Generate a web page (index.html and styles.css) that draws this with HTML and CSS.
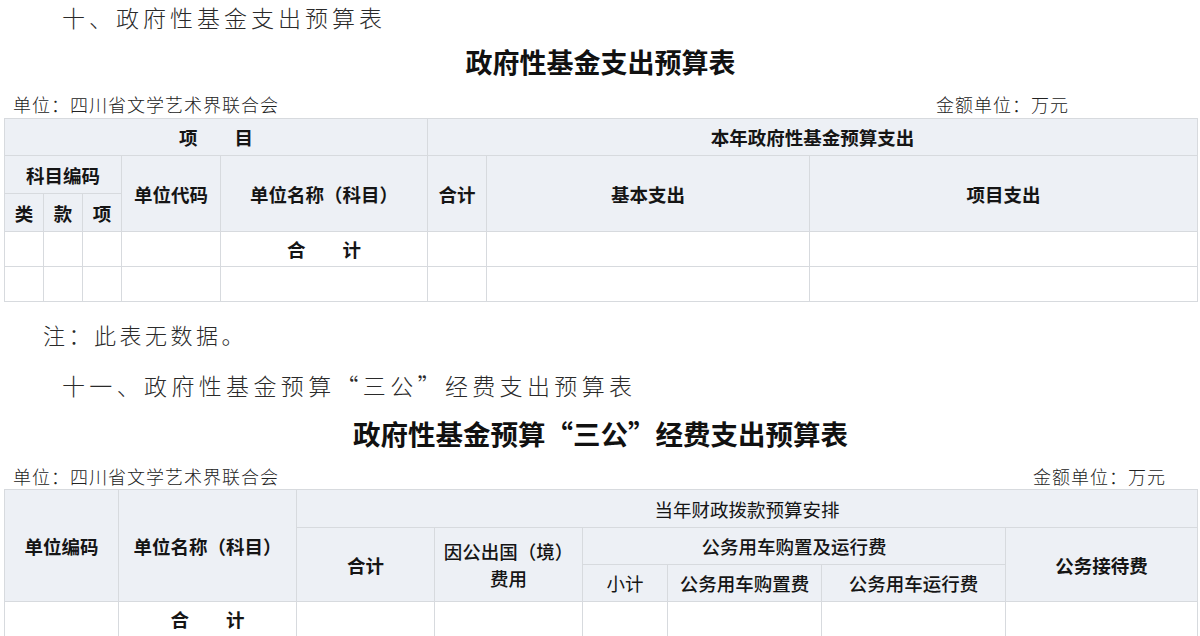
FILE: index.html
```html
<!DOCTYPE html>
<html lang="zh-CN">
<head>
<meta charset="utf-8">
<title>政府性基金支出预算表</title>
<link rel="stylesheet" href="styles.css">
</head>
<body>
<div class="page">
  <h2 class="sec-heading">十、政府性基金支出预算表</h2>
  <h1 class="table-title title-one">政府性基金支出预算表</h1>
  <div class="unit-row unit-one">
    <span>单位：四川省文学艺术界联合会</span>
    <span>金额单位：万元</span>
  </div>
  <table class="budget budget-one">
    <colgroup>
      <col class="c39"><col class="c39"><col class="c39"><col class="c99"><col class="c207"><col class="c59"><col class="c323"><col class="c388">
    </colgroup>
    <thead>
      <tr class="r37">
        <th colspan="5">项　　目</th>
        <th colspan="3">本年政府性基金预算支出</th>
      </tr>
      <tr class="r38">
        <th colspan="3">科目编码</th>
        <th rowspan="2">单位代码</th>
        <th rowspan="2">单位名称（科目）</th>
        <th rowspan="2">合计</th>
        <th rowspan="2">基本支出</th>
        <th rowspan="2">项目支出</th>
      </tr>
      <tr class="r38">
        <th>类</th>
        <th>款</th>
        <th>项</th>
      </tr>
    </thead>
    <tbody>
      <tr class="r35">
        <td></td><td></td><td></td><td></td>
        <td class="sum">合　　计</td>
        <td></td><td></td><td></td>
      </tr>
      <tr class="r35">
        <td></td><td></td><td></td><td></td><td></td><td></td><td></td><td></td>
      </tr>
    </tbody>
  </table>

  <p class="note">注：此表无数据。</p>

  <h2 class="sec-heading sec-two">十一、政府性基金预算“三公”经费支出预算表</h2>
  <h1 class="table-title title-two">政府性基金预算“三公”经费支出预算表</h1>
  <div class="unit-row unit-two">
    <span>单位：四川省文学艺术界联合会</span>
    <span>金额单位：万元</span>
  </div>
  <table class="budget budget-two">
    <colgroup>
      <col class="c114"><col class="c178"><col class="c138"><col class="c148"><col class="c85"><col class="c154"><col class="c184"><col class="c192">
    </colgroup>
    <thead>
      <tr class="r38">
        <th rowspan="3">单位编码</th>
        <th rowspan="3">单位名称（科目）</th>
        <th colspan="6" class="light">当年财政拨款预算安排</th>
      </tr>
      <tr class="r37">
        <th rowspan="2">合计</th>
        <th rowspan="2" class="medium two-line">因公出国（境）<br>费用</th>
        <th colspan="3" class="medium">公务用车购置及运行费</th>
        <th rowspan="2">公务接待费</th>
      </tr>
      <tr class="r37">
        <th class="light">小计</th>
        <th class="medium">公务用车购置费</th>
        <th class="medium">公务用车运行费</th>
      </tr>
    </thead>
    <tbody>
      <tr class="r35">
        <td></td>
        <td class="sum">合　　计</td>
        <td></td><td></td><td></td><td></td><td></td><td></td>
      </tr>
    </tbody>
  </table>
</div>
</body>
</html>
```

FILE: styles.css
```css
html, body {
  margin: 0;
  padding: 0;
  background: #ffffff;
}

body {
  font-family: "Noto Sans CJK SC", "Noto Sans", sans-serif;
  color: #1e1e1e;
  width: 1200px;
  height: 636px;
  overflow: hidden;
}

.page {
  padding: 0 3px 0 4px;
}

.sec-heading {
  margin: 0;
  padding-left: 58px;
  font-size: 23px;
  font-weight: 300;
  letter-spacing: 4px;
  line-height: 34px;
  color: #2a2a2a;
}

.sec-two {
  margin-top: 19px;
  padding-left: 58px;
  letter-spacing: 4.35px;
}

.table-title {
  margin: 0;
  text-align: center;
  font-size: 27px;
  font-weight: 700;
  line-height: 32px;
  color: #111;
}

.title-one {
  margin-top: 12px;
}

.title-two {
  margin-top: 15px;
  font-size: 27.5px;
}

.unit-row {
  display: flex;
  justify-content: space-between;
  font-size: 18px;
  font-weight: 300;
  letter-spacing: 1px;
  line-height: 24px;
  padding-left: 9px;
  color: #222;
}

.unit-one {
  margin-top: 14px;
  margin-bottom: 2px;
  padding-right: 128px;
}

.unit-two {
  margin-top: 15px;
  margin-bottom: 1px;
  padding-right: 31px;
}

.note {
  margin: 17px 0 0 0;
  padding-left: 39px;
  font-size: 22px;
  font-weight: 300;
  letter-spacing: 3.5px;
  line-height: 30px;
  color: #2a2a2a;
}

.budget {
  width: 1193px;
  table-layout: fixed;
  border-collapse: collapse;
  font-size: 18.5px;
}

.budget th,
.budget td {
  border: 1px solid #d7dade;
  padding: 0;
  text-align: center;
  vertical-align: middle;
  line-height: 24px;
}

.budget th {
  background: #edf0f5;
  font-weight: 700;
  color: #151515;
}

.budget th.medium {
  font-weight: 500;
}

.budget th.light {
  font-weight: 400;
}

.budget th.two-line {
  line-height: 27px;
}

.budget td {
  background: #ffffff;
}

.budget td.sum {
  font-weight: 700;
  color: #151515;
}

.r35 { height: 35px; }
.r37 { height: 37px; }
.r38 { height: 38px; }

.c39 { width: 39px; }
.c59 { width: 59px; }
.c85 { width: 85px; }
.c99 { width: 99px; }
.c114 { width: 114px; }
.c138 { width: 138px; }
.c148 { width: 148px; }
.c154 { width: 154px; }
.c178 { width: 178px; }
.c184 { width: 184px; }
.c192 { width: 192px; }
.c207 { width: 207px; }
.c323 { width: 323px; }
.c388 { width: 388px; }
```
